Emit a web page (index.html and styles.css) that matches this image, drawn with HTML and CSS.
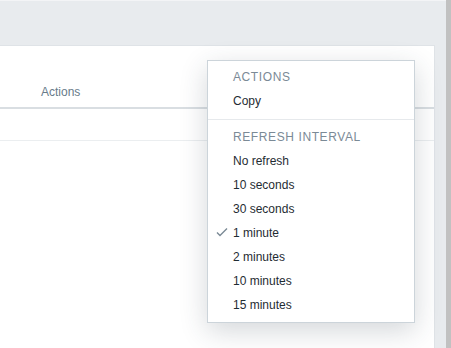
FILE: index.html
```html
<!DOCTYPE html>
<html lang="en">
<head>
    <meta charset="UTF-8">
    <meta name="viewport" content="width=device-width, initial-scale=1.0">
    <title>Widget menu</title>
    <link rel="stylesheet" href="styles.css">
</head>
<body>
    <div class="page">
        <div class="content">
            <div class="panel">
                <div class="table-head">
                    <span class="th">Actions</span>
                </div>
                <div class="table-row"></div>
            </div>
        </div>
        <div class="scrollbar"></div>
    </div>

    <div class="menu">
        <div class="menu-title">Actions</div>
        <div class="menu-item">Copy</div>
        <div class="menu-sep"></div>
        <div class="menu-title">Refresh interval</div>
        <div class="menu-item">No refresh</div>
        <div class="menu-item">10 seconds</div>
        <div class="menu-item">30 seconds</div>
        <div class="menu-item selected">
            <svg class="check" width="12" height="9" viewBox="0 0 12 9">
                <polyline points="1,4.5 4,7.5 11,0.5" fill="none" stroke="#7b8a96" stroke-width="1.4"/>
            </svg>
            1 minute
        </div>
        <div class="menu-item">2 minutes</div>
        <div class="menu-item">10 minutes</div>
        <div class="menu-item">15 minutes</div>
    </div>
</body>
</html>
```

FILE: styles.css
```css
:root {
    --bg-gray: #e8ebee;
    --border: #dfe3e7;
    --text: #1f2c33;
    --muted: #7b8a96;
}

body {
    margin: 0;
    font-family: 'Liberation Sans', Arial, sans-serif;
    font-size: 12px;
    background-color: var(--bg-gray);
    overflow: hidden;
}

.page {
    display: flex;
    height: 348px;
}

.content {
    flex: 1;
    padding: 44px 11px 0 0;
    border-top: 1px solid #f3f4f6;
    display: flex;
}

.panel {
    flex: 1;
    background: white;
    border-top: 1px solid var(--border);
    border-right: 1px solid var(--border);
}

.table-head {
    height: 63px;
    border-bottom: 2px solid #d9dee2;
    display: flex;
    align-items: flex-end;
    padding-left: 41px;
    box-sizing: border-box;
}

.th {
    color: #687b8a;
    line-height: 14px;
    margin-bottom: 8px;
}

.table-row {
    height: 31px;
    border-bottom: 1px solid #ebeef0;
}

.scrollbar {
    width: 5px;
    background: #c1c1c1;
}

.menu {
    position: absolute;
    left: 207px;
    top: 60px;
    width: 206px;
    padding: 4px 0 5px;
    background: white;
    border: 1px solid #ccd4da;
    box-shadow: 0 8px 26px rgba(40, 56, 70, 0.2);
}

.menu-title {
    height: 24px;
    line-height: 24px;
    padding-left: 25px;
    color: var(--muted);
    text-transform: uppercase;
    letter-spacing: 0.6px;
}

.menu-item {
    position: relative;
    height: 24px;
    line-height: 24px;
    padding-left: 25px;
    color: var(--text);
}

.check {
    position: absolute;
    left: 8px;
    top: 7px;
}

.menu-sep {
    height: 1px;
    background: #e6e9ec;
    margin: 6px 0 5px;
}
```
